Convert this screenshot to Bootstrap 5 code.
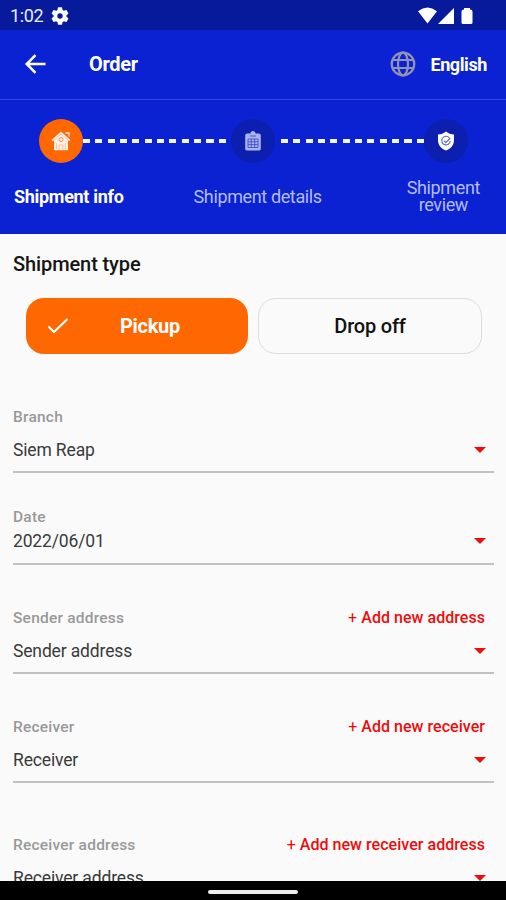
<!DOCTYPE html>
<html lang="en">
<head>
<meta charset="utf-8">
<meta name="viewport" content="width=device-width, initial-scale=1">
<title>Order</title>
<link rel="stylesheet" href="https://cdn.jsdelivr.net/npm/bootstrap@5.3.0/dist/css/bootstrap.min.css">
<style>
  body { font-family: Roboto, "Noto Sans", sans-serif; background: #fafafa; color: #151515; }
  .screen { height: 900px; }
  .status-bar { height: 30px; background: #071a9c; padding: 1px 33px 0 10px; }
  .clock { font-size: 18px; line-height: 30px; letter-spacing: -.35px; color: #e9edff; margin-right: 8px; }
  .top-bar { height: 70px; background: #0b22d2; border-bottom: 1px solid #3349dd; padding: 0 19px 1px 24px; }
  .screen-title { font-size: 20px; font-weight: 700; letter-spacing: -.3px; margin-left: 41px; }
  .lang { font-size: 18px; font-weight: 700; letter-spacing: -.4px; margin-left: 14px; }
  .stepper { height: 134px; background: #0b22d2; padding-top: 19px; }
  .track { padding: 0 38px 0 39px; }
  .dot { width: 44px; height: 44px; background: #0c1fae; }
  .dot.active-dot { background: #ff6700; }
  .dash { height: 4px; background: repeating-linear-gradient(90deg, #f4f5ff 0 7px, transparent 7px 12.35px); }
  .dash-a { width: 148px; }
  .dash-b { width: 143px; margin-left: 6px; }
  .step-labels { height: 40px; margin-top: 13px; padding: 0 26px 0 14px; font-size: 18px; line-height: 17px; color: #b4bcf8; letter-spacing: -.37px; }
  .step-labels .current { color: #fff; font-weight: 700; letter-spacing: -.3px; }
  .step-labels .mid { margin-left: -15px; }
  .content { padding: 0 12px 0 13px; }
  .section-title { font-size: 20px; font-weight: 500; line-height: 24px; letter-spacing: -.1px; margin: 18px 0 22px; }
  .choices { gap: 10px; padding: 0 0 0 13px; }
  .choice { height: 56px; font-size: 20px; font-weight: 500; border-radius: 18px; padding: 0; }
  .pick { width: 222px; background: #ff6700; color: #fff; font-weight: 700; letter-spacing: -.3px; }
  .pick svg { margin: 0 51px 0 20px; }
  .drop { width: 224px; border: 1px solid #dcdcdc; color: #111; letter-spacing: -.2px; }
  .field { border-bottom: 2px solid #c2c2c2; line-height: 20px; }
  .field-label { font-size: 15.5px; font-weight: 500; color: #999; letter-spacing: .22px; }
  .field-value { font-size: 17.5px; color: #3a3a3a; letter-spacing: -.15px; margin-top: 13px; height: 31px; }
  .tight .field-value { margin-top: 4px; height: 32px; }
  .add { font-size: 16px; font-weight: 500; color: #f00b0b; letter-spacing: .04px; margin-right: 9px; }
  .add b { font-weight: 400; }
  .field svg { margin-right: 8px; margin-top: 7px; }
  .f1 { margin-top: 53px; } .f2 { margin-top: 34px; } .f3 { margin-top: 43px; }
  .f4 { margin-top: 43px; } .f5 { margin-top: 52px; }
  .gesture-bar { height: 19px; background: #000; padding-top: 2px; }
  .pill { width: 90px; height: 4px; background: #eee; }
</style>
<script src="https://cdn.jsdelivr.net/npm/bootstrap@5.3.0/dist/js/bootstrap.bundle.min.js"></script>
</head>
<body>
<div class="screen d-flex flex-column overflow-hidden">
  <div class="status-bar d-flex align-items-center flex-shrink-0">
    <span class="clock">1:02</span>
    <svg width="18" height="18" viewBox="2 2 20 20" fill="#fff"><path d="M19.14 12.94c.04-.3.06-.61.06-.94s-.02-.64-.07-.94l2.03-1.58a.49.49 0 0 0 .12-.61l-1.92-3.32a.49.49 0 0 0-.59-.22l-2.39.96a7 7 0 0 0-1.62-.94l-.36-2.54a.48.48 0 0 0-.48-.41h-3.84c-.24 0-.43.17-.47.41l-.36 2.54c-.59.24-1.13.57-1.62.94l-2.39-.96a.48.48 0 0 0-.59.22L2.74 8.87c-.12.21-.08.47.12.61l2.03 1.58a7 7 0 0 0 0 1.88l-2.03 1.58a.49.49 0 0 0-.12.61l1.92 3.32c.12.22.37.29.59.22l2.39-.96c.5.38 1.03.7 1.62.94l.36 2.54c.05.24.24.41.48.41h3.84c.24 0 .44-.17.47-.41l.36-2.54c.59-.24 1.13-.56 1.62-.94l2.39.96c.22.08.47 0 .59-.22l1.92-3.32a.48.48 0 0 0-.12-.61zM12 15a3 3 0 1 1 0-6 3 3 0 0 1 0 6z"/></svg>
    <svg class="ms-auto" width="56" height="18" viewBox="-1 0 56 18" fill="#fff"><path d="M0 4.200Q9.500-3.200 19 4.200L9.500 16.500zM20 17 36 1v16zM46 1h6v1.500q2.500 0 2.500 2V15.500q0 1.500-1.500 1.500h-8q-1.500 0-1.500-1.500V4.500q0-2 2.500-2z"/></svg>
  </div>

  <nav class="top-bar d-flex align-items-center text-white flex-shrink-0">
    <svg width="24" height="24" viewBox="0 0 24 24" fill="none" stroke="#fff" stroke-width="2.500"><path d="M21.500 12H3.500M11.500 3.200 2.700 12l8.800 8.800"/></svg>
    <span class="screen-title">Order</span>
    <svg class="ms-auto" width="26" height="26" viewBox="0 0 26 26" fill="none" stroke="#9293b4" stroke-width="2.200"><circle cx="13" cy="13" r="11.300"/><ellipse cx="13" cy="13" rx="5" ry="11.300"/><path d="M2.500 9h21M2.500 17h21"/></svg>
    <span class="lang">English</span>
  </nav>

  <div class="stepper flex-shrink-0">
    <div class="track d-flex align-items-center">
      <div class="dot active-dot rounded-circle d-flex align-items-center justify-content-center">
        <svg width="20" height="20" viewBox="0 0 20 20"><path d="M10 .5 19.500 9l-1.300 1.300L17 9.300v9.900H3V9.300l-1.200 1L.5 9z" fill="#fff0e6"/><path d="M14.500 2h3.500v3.500" fill="none" stroke="#fff0e6" stroke-width="1.300"/><path d="M3 9.200 10 3l7 6.200M8 19v-5h4v5M5.500 12v6M14.500 12v6" fill="none" stroke="#ffb07e" stroke-width=".7"/><circle cx="10" cy="8.500" r="2" fill="none" stroke="#ff8c40"/></svg>
      </div>
      <div class="dash dash-a"></div>
      <div class="dot rounded-circle d-flex align-items-center justify-content-center">
        <svg width="18" height="20" viewBox="0 0 18 20"><path d="M3 2.500h3.500a2.500 2.500 0 0 1 5 0H15A1.800 1.800 0 0 1 16.800 4v14A1.500 1.500 0 0 1 15 19.500H3A1.500 1.500 0 0 1 1.200 18V4A1.800 1.800 0 0 1 3 2.500z" fill="#a9b2f2"/><path d="M6 5h6M4 8h10v8.500H4zM4 10.800h10M4 13.600h10M7.300 8v8.500M10.700 8v8.500" fill="none" stroke="#3446bd" stroke-width=".8"/></svg>
      </div>
      <div class="dash dash-b"></div>
      <div class="dot rounded-circle d-flex align-items-center justify-content-center">
        <svg width="18" height="20" viewBox="0 0 18 20"><path d="M9 .5C11.500 2.700 14 3.300 17 3.500V9c0 5.200-3 8.500-8 10.500C4 17.500 1 14.200 1 9V3.500C4 3.300 6.500 2.700 9 .5z" fill="#fff"/><path d="M12.200 6.700A4.300 4.300 0 1 0 13.300 10M6.800 9.700l2 2L13.200 7" fill="none" stroke="#5867b9" stroke-width="1.100"/></svg>
      </div>
    </div>
    <div class="step-labels d-flex align-items-center justify-content-between text-center">
      <span class="current">Shipment info</span>
      <span class="mid">Shipment details</span>
      <span>Shipment<br>review</span>
    </div>
  </div>

  <main class="content flex-grow-1 overflow-hidden">
    <h1 class="section-title">Shipment type</h1>
    <div class="choices d-flex">
      <button class="btn choice pick d-flex align-items-center"><svg width="22" height="18" viewBox="0 0 22 18" fill="none" stroke="#fff" stroke-width="2.200"><path d="m1.500 9.500 5.500 5.500L20.500 2"/></svg>Pickup</button>
      <button class="btn choice drop">Drop off</button>
    </div>

    <div class="field f1">
      <div class="field-label">Branch</div>
      <div class="field-value d-flex justify-content-between align-items-start"><span>Siem Reap</span><svg width="12" height="6" viewBox="0 0 12 6"><path d="M0 0h12L6 6z" fill="#f00b0b"/></svg></div>
    </div>
    <div class="field f2 tight">
      <div class="field-label">Date</div>
      <div class="field-value d-flex justify-content-between align-items-start"><span>2022/06/01</span><svg width="12" height="6" viewBox="0 0 12 6"><path d="M0 0h12L6 6z" fill="#f00b0b"/></svg></div>
    </div>
    <div class="field f3">
      <div class="d-flex justify-content-between"><span class="field-label">Sender address</span><span class="add"><b>+</b> Add new address</span></div>
      <div class="field-value d-flex justify-content-between align-items-start"><span>Sender address</span><svg width="12" height="6" viewBox="0 0 12 6"><path d="M0 0h12L6 6z" fill="#f00b0b"/></svg></div>
    </div>
    <div class="field f4">
      <div class="d-flex justify-content-between"><span class="field-label">Receiver</span><span class="add"><b>+</b> Add new receiver</span></div>
      <div class="field-value d-flex justify-content-between align-items-start"><span>Receiver</span><svg width="12" height="6" viewBox="0 0 12 6"><path d="M0 0h12L6 6z" fill="#f00b0b"/></svg></div>
    </div>
    <div class="field f5">
      <div class="d-flex justify-content-between"><span class="field-label">Receiver address</span><span class="add"><b>+</b> Add new receiver address</span></div>
      <div class="field-value d-flex justify-content-between align-items-start"><span>Receiver address</span><svg width="12" height="6" viewBox="0 0 12 6"><path d="M0 0h12L6 6z" fill="#f00b0b"/></svg></div>
    </div>
  </main>

  <div class="gesture-bar d-flex align-items-center justify-content-center flex-shrink-0"><div class="pill rounded-pill"></div></div>
</div>
</body>
</html>
